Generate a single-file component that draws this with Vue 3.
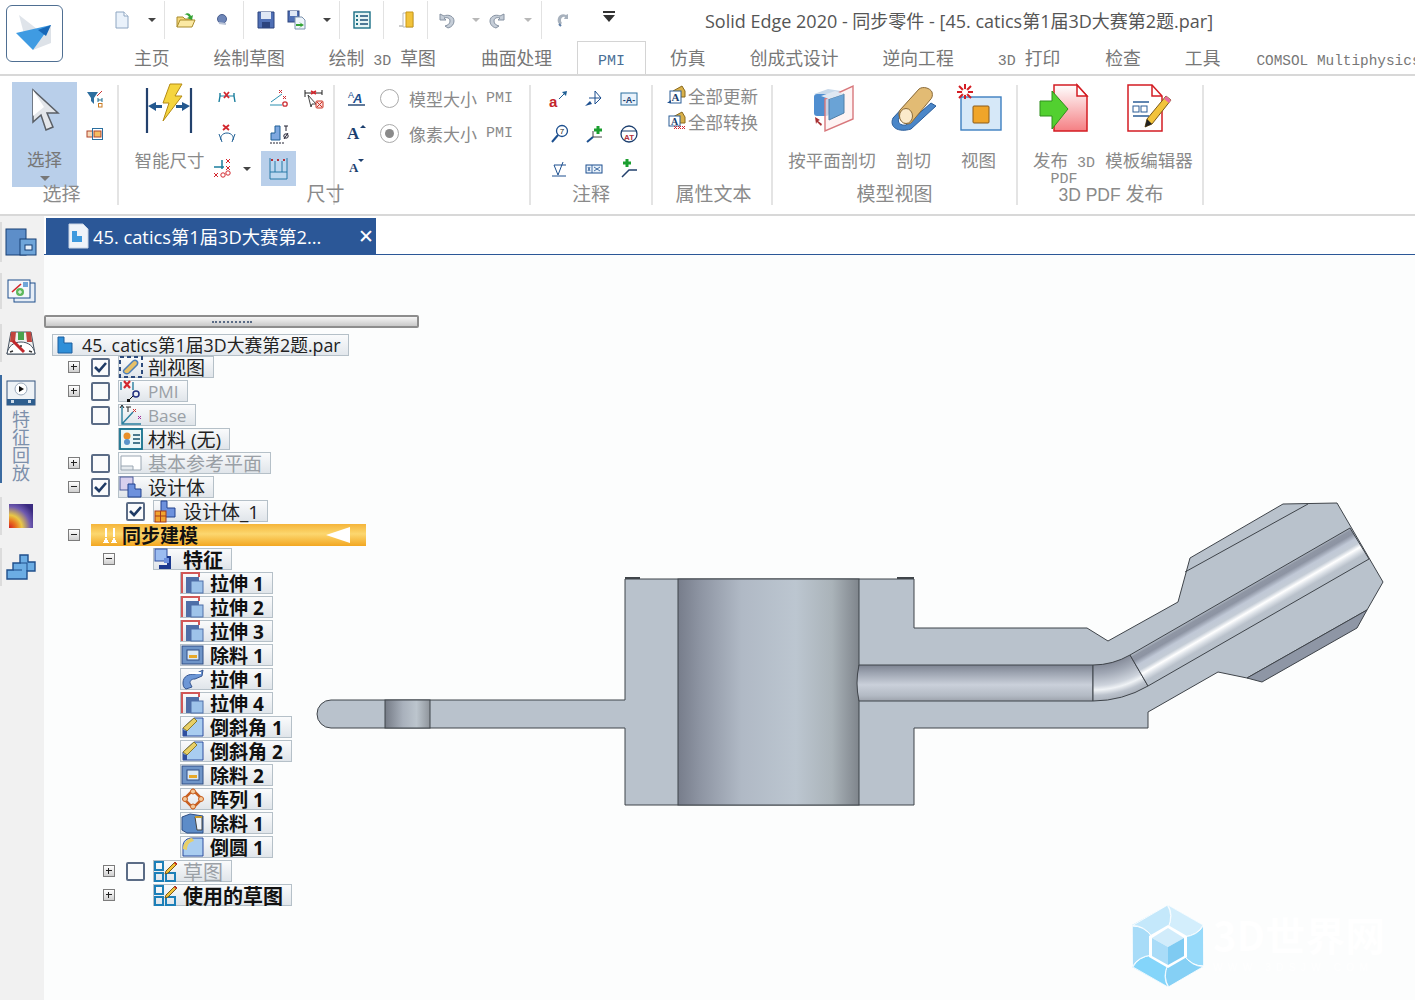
<script setup>
const svg = (w, h, body) => `<svg xmlns="http://www.w3.org/2000/svg" width="${w}" height="${h}" viewBox="0 0 ${w} ${h}" style="display:block;overflow:visible">${body}</svg>`;

const icons = {
  doc: svg(18, 20, '<path d="M3 2h8l4 4v12H3z" fill="#eaf2fb" stroke="#8ea6c2"/><path d="M11 2v4h4" fill="#fff" stroke="#8ea6c2"/>'),
  open: svg(22, 20, '<path d="M2 17V7h6l2 2h7v2" fill="#f4d77a" stroke="#a98b2c"/><path d="M2 17l3-7h15l-3 7z" fill="#fbe9a3" stroke="#a98b2c"/><path d="M9 5c3-3 6-2 7 1l2-1-1 5-5-2 2-1c-1-2-3-3-5-2z" fill="#35a336"/>'),
  globe: svg(16, 18, '<circle cx="8" cy="8" r="4.5" fill="#6e86b8" stroke="#4a5f8f"/><path d="M5 12l7 1" stroke="#b9c3d6" stroke-width="2"/>'),
  save: svg(18, 18, '<path d="M1 1h16v16H1z" fill="#4f6fb5" stroke="#2c447f"/><rect x="4" y="1" width="10" height="7" fill="#dfe7f5"/><rect x="5" y="11" width="8" height="6" fill="#2c447f"/>'),
  saveas: svg(20, 20, '<rect x="1" y="1" width="11" height="11" fill="#4f6fb5" stroke="#2c447f"/><rect x="3" y="1" width="7" height="5" fill="#dfe7f5"/><path d="M8 7h7l3 3v9H8z" fill="#eef4fb" stroke="#7c93ad"/><path d="M9 14h5l-2-2 5 3-5 3 2-2H9z" fill="#35a336"/>'),
  list: svg(18, 18, '<rect x="1" y="1" width="16" height="16" fill="#e6f4f4" stroke="#1b6f86" stroke-width="1.4"/><path d="M7 5h8M7 9h8M7 13h8" stroke="#1b4f76" stroke-width="1.3"/><path d="M3 4h2v2H3zM3 8h2v2H3zM3 12h2v2H3z" fill="#1b6f86"/>'),
  door: svg(18, 18, '<path d="M2 15h5" stroke="#9a9a9a"/><path d="M6 2h10v14H6z" fill="#fff" stroke="#bbb"/><path d="M9 1h7v15H9z" fill="#f2c33b" stroke="#c99818"/>'),
  undo: svg(18, 18, '<path d="M3 3v6h6L7 7c3-1 6 0 6 3s-2 4-5 5l3 2c4-1 6-4 6-7 0-5-6-7-10-5z" fill="#c6ced8" stroke="#8692a2"/>'),
  redo: svg(18, 18, '<path d="M15 3v6H9l2-2c-3-1-6 0-6 3s2 4 5 5l-3 2c-4-1-6-4-6-7 0-5 6-7 10-5z" fill="#c6ced8" stroke="#8692a2"/>'),
  redoSmall: svg(16, 16, '<path d="M12 2v5H8l1-2c-2-1-4 1-4 3 0 1 0 2 1 3l-2 2C2 11 1 9 2 6c1-3 5-5 8-3z" fill="#a7b1bd"/><path d="M3 12l2 2" stroke="#5f7ea6" stroke-width="2"/>'),
  qat: svg(14, 12, '<path d="M1 1h12" stroke="#333" stroke-width="2"/><path d="M1 4h12l-6 7z" fill="#333"/>'),

  cursor: svg(28, 46, '<path d="M2 2v32l8-7 5 15 7-3-6-14h11z" fill="#e3e6ea" stroke="#5a5f66" stroke-width="1.5"/><path d="M2 2l11 17-11 9z" fill="#fff"/>'),
  filter: svg(18, 18, '<path d="M1 2h11L8 8v6L5 11V8z" fill="#2d6e9f"/><path d="M11 6l5-5" stroke="#c33"/><path d="M12 8v4M16 8v4M12 10h4" fill="none" stroke="#1c6f8f"/><rect x="12.500" y="13.500" width="3.500" height="3.500" fill="none" stroke="#c97a22"/>'),
  boxes: svg(18, 14, '<rect x="1" y="4" width="6" height="6" fill="#f7d9b8" stroke="#b0452a"/><rect x="6.500" y="1.500" width="10" height="11" fill="#fff" stroke="#2b6f9f"/><rect x="8" y="4" width="7" height="6" fill="#f4bd62" stroke="#b0452a"/>'),
  smart: svg(50, 50, '<path d="M2 5v45M46 5v45" stroke="#23416d" stroke-width="2.2"/><path d="M3 23l8-4v3h6v3h-6v3zM45 23l-8-4v3h-6v3h6v3z" fill="#23588f"/><path d="M25 1h12l-7 12h7L18 38l6-18h-6z" fill="#f5d53f" stroke="#b58b14"/>'),
  dimA: svg(20, 18, '<path d="M3 3v3l-1 6M17 3v3l1 6" fill="none" stroke="#1b7f9e" stroke-width="1.4"/><path d="M3 6h14" stroke="#1b7f9e"/><path d="M7 2l5 6M12 2L7 8" stroke="#d3272e" stroke-width="1.8"/>'),
  dimB: svg(20, 20, '<path d="M1 16h12" stroke="#2b8fb0"/><path d="M2 13L13 5" stroke="#2b8fb0"/><path d="M10 1l3 3M13 1l-3 3M14 7l3 3M17 7l-3 3" stroke="#cc2f35"/><circle cx="16" cy="15" r="2.200" fill="none" stroke="#cc2f35" stroke-width="1.300"/>'),
  dimC: svg(22, 22, '<path d="M2 2v7M2 5h17M19 2v5" stroke="#222" fill="none"/><path d="M8 3l5 3M13 3L8 6" stroke="#d3272e" stroke-width="1.500"/><path d="M5 7l8 9H9l-1 3z" fill="#fff" stroke="#444"/><rect x="13" y="13" width="7" height="7" rx="1" fill="#f9dede" stroke="#c32"/><path d="M14 14l5 5M19 14l-5 5" stroke="#c32"/>'),
  dimD: svg(20, 20, '<path d="M6 1l6 5M12 1L6 6" stroke="#d3272e" stroke-width="1.800"/><path d="M4 16c-1-3 1-7 6-7s7 4 6 7" fill="none" stroke="#1f5f95"/><path d="M2 10l3 8M18 10l-3 8" stroke="#1f5f95"/>'),
  dimE: svg(20, 20, '<path d="M2 16V9h4V2h5v14z" fill="#7ea8e0" stroke="#1f5f95"/><path d="M1 19h14" stroke="#223" stroke-dasharray="2 1"/><path d="M15 2h4M17 2v5" stroke="#223"/><circle cx="17" cy="12" r="2.200" fill="none" stroke="#223"/><path d="M15 15l4-6" stroke="#223"/>'),
  dimF: svg(22, 22, '<path d="M9 2v9M1 9h10" stroke="#1b7f9e" stroke-width="1.500"/><path d="M13 1l4 4M17 1l-4 4M13 8l4 4M17 8l-4 4M1 15l4 4M5 15l-4 4" stroke="#d3272e"/><circle cx="10" cy="17" r="2.200" fill="none" stroke="#d3272e"/><circle cx="15" cy="15" r="2.200" fill="none" stroke="#d3272e"/>'),
  dimG: svg(22, 24, '<rect x="2" y="3" width="17" height="19" fill="#bcd7ef"/><path d="M2 1v21h17V1M7 4v11h7V4M2 15h5M14 15h5" fill="none" stroke="#2679a6"/><path d="M3 2l2 2M5 2L3 4M9 2l2 2M11 2L9 4M15 2l2 2M17 2l-2 2" stroke="#b5323a"/>'),
  textA: svg(20, 16, '<text x="1" y="8" font-size="9" font-family="Liberation Sans" fill="#1c4f8f">A</text><text x="6" y="13" font-size="13" font-weight="700" font-family="Liberation Sans" fill="#1c4f8f" font-style="italic">A</text><path d="M1 15h17" stroke="#1c3f6f" stroke-width="1.400"/>'),
  textUp: svg(22, 18, '<text x="1" y="16" font-size="17" font-weight="700" font-family="Liberation Serif" fill="#1c3f6f">A</text><path d="M14 5l3-3 3 3z" fill="#1c3f6f"/>'),
  textDown: svg(18, 16, '<text x="1" y="15" font-size="13" font-weight="700" font-family="Liberation Serif" fill="#1c3f6f">A</text><path d="M10 2h6l-3 3z" fill="#1c3f6f"/>'),

  n1: svg(20, 20, '<path d="M10 10l7-7" stroke="#1f5f95"/><path d="M18 2l-1 5-4-4z" fill="#1f5f95"/><text x="0" y="18" font-size="15" font-weight="700" font-family="Liberation Sans" fill="#c3242b">a</text>'),
  n2: svg(20, 20, '<path d="M11 2v13M5 9h12L11 2M17 9l-6 6" fill="none" stroke="#1c4f8f"/><path d="M1 17l5-5 2 3z" fill="#1c4f8f"/>'),
  n3: svg(20, 18, '<rect x="2" y="3" width="16" height="12" fill="#e9f2fb" stroke="#2b6f9f"/><text x="10" y="12.500" text-anchor="middle" font-size="9" font-family="Liberation Sans" font-weight="700" fill="#1c3f6f">-A-</text>'),
  n4: svg(20, 20, '<circle cx="13" cy="7" r="5.500" fill="#fff" stroke="#1c4f8f" stroke-width="1.300"/><text x="13" y="10" text-anchor="middle" font-size="8" font-family="Liberation Sans" fill="#222">7</text><path d="M9 11l-6 7" stroke="#1c4f8f" stroke-width="2"/>'),
  n5: svg(20, 20, '<path d="M9 13h9" stroke="#444"/><path d="M9 7v6" stroke="#444"/><path d="M14 2v8M10 6h8" stroke="#1c9f30" stroke-width="3"/><path d="M9 13l-6 5" stroke="#1c4f8f" stroke-width="2"/>'),
  n6: svg(20, 20, '<circle cx="10" cy="10" r="8" fill="#fff" stroke="#1c3f6f" stroke-width="1.300"/><path d="M2 7h16" stroke="#1c3f6f"/><text x="10" y="16" text-anchor="middle" font-size="8" font-weight="700" font-family="Liberation Sans" fill="#b5323a">AT</text>'),
  n7: svg(20, 20, '<path d="M5 6l4 10 5-13M5 6h12" fill="none" stroke="#1c4f8f"/><path d="M3 17h14" stroke="#1c4f8f"/>'),
  n8: svg(20, 14, '<rect x="2" y="3" width="16" height="8" fill="#e9f2fb" stroke="#1c4f8f"/><path d="M8 3v8M4 5l2 4M6 5L4 9M10 5l6 4M16 5l-6 4" stroke="#1c4f8f" stroke-width=".8"/>'),
  n9: svg(20, 22, '<path d="M8 1v8M4 5h8" stroke="#1c9f30" stroke-width="3"/><path d="M3 19l7-7h8" fill="none" stroke="#23416d" stroke-width="1.500"/>'),
  attrA: svg(20, 20, '<path d="M6 6l9-5 3 5v6H6z" fill="#d8b04a" stroke="#8a6a1e"/><rect x="3" y="6" width="11" height="12" fill="#fff" stroke="#2b5d96"/><text x="8.500" y="16" text-anchor="middle" font-size="11" font-weight="700" font-family="Liberation Serif" fill="#1c3f6f">A</text><path d="M0 18l4-3 0 3z" fill="#1c4f8f"/>'),
  attrB: svg(20, 20, '<path d="M6 6l9-5 3 5v6H6z" fill="#d8b04a" stroke="#8a6a1e"/><rect x="2" y="5" width="11" height="10" fill="#fff" stroke="#2b5d96"/><text x="7.500" y="14" text-anchor="middle" font-size="10" font-weight="700" font-family="Liberation Serif" fill="#1c3f6f">A</text><path d="M7 15l3 3M10 15l-3 3M11 15l3 3M14 15l-3 3M15 15l3 3M18 15l-3 3" stroke="#d3272e"/>'),
  cutPlane: svg(50, 50, '<path d="M7 11l14-5 13 2v4" fill="#c7d9ea"/><rect x="7" y="11" width="15" height="22" rx="3" fill="#4f8ed0"/><path d="M18 16L46 3v33L18 48z" fill="#fdeeee" fill-opacity=".7" stroke="#d8787c" stroke-width="1.400"/><path d="M22 16l15-5v19l-15 7z" fill="#6aa3d6" stroke="#4f7fa8"/><path d="M22 16l-8-3 14-5 9 3z" fill="#dfe8f2"/><path d="M13 37l-5-3 1 7 1-2 4 4 1-2-4-3z" fill="#a72f32"/>'),
  cutSolid: svg(48, 50, '<path d="M3 35L30 6l3 2L9 35c-2 4 1 8 7 7l25-22 5 3-25 23C8 50-1 44 3 35z" fill="#4a86c8" stroke="#2a5d9a"/><path d="M10 27L29 6c4-3 11-1 13 3 1 4 0 6-2 8L21 40c-7 4-15-6-11-13z" fill="#e2bb74" stroke="#8a6a3a"/><ellipse cx="16" cy="33" rx="6.500" ry="7.500" fill="#fbeacb" stroke="#8a6a3a"/>'),
  view: svg(48, 50, '<rect x="6" y="14" width="40" height="33" fill="#d6e8f8" stroke="#3d7fc0" stroke-width="1.400"/><rect x="18" y="23" width="16" height="17" rx="1" fill="#f0a52a" stroke="#8a5a1a"/><path d="M10 1v15M2 9h16M4 3l12 12M16 3L4 15" stroke="#d41d23" stroke-width="2"/><circle cx="10" cy="9" r="3" fill="#fff"/>'),
  pdf: svg(50, 50, '<defs><linearGradient id="pdfPage" x1="0" x2="0" y1="0" y2="1"><stop offset="0" stop-color="#fff"/><stop offset="1" stop-color="#f57f83"/></linearGradient></defs><path d="M15 2h23l10 11v35H15z" fill="url(#pdfPage)" stroke="#d41d23" stroke-width="1.500"/><path d="M38 2v11h10z" fill="#fff" stroke="#d41d23" stroke-width="1.500"/><path d="M1 18h12V8l16 18-16 20V33H1z" fill="#52d030" stroke="#2f8f1c"/>'),
  template: svg(46, 50, '<path d="M2 2h24l10 11v35H2z" fill="#fff" stroke="#d41d23" stroke-width="1.500"/><path d="M26 2v11h10" fill="none" stroke="#d41d23" stroke-width="1.500"/><path d="M7 19h16M7 33h16" stroke="#2b5d96" stroke-width="1.500"/><rect x="7" y="23" width="6" height="6" fill="none" stroke="#2b5d96"/><rect x="15" y="23" width="6" height="6" fill="none" stroke="#2b5d96"/><path d="M40 13l5 4-19 24-7 3 2-8z" fill="#f2c33b" stroke="#7a5a1a"/><path d="M40 13l5 4-2 3-5-4z" fill="#e86aa0"/><path d="M21 36l5 5-7 3z" fill="#222"/>'),

  tabDoc: svg(22, 26, '<path d="M2 1h14l5 5v19H2z" fill="#eef3f9" stroke="#c9d5e4"/><path d="M5 8h5v5h5v6H5z" fill="#3f9ade"/>'),
  rootDoc: svg(18, 18, '<path d="M2 1h6v6h8v10H2z" fill="#2f8fd8" stroke="#1d5f9f"/>'),
  winTile: svg(32, 28, '<rect x="1" y="1" width="20" height="26" fill="#5d8ec9" stroke="#173f75"/><rect x="15" y="11" width="16" height="16" fill="#6fa5d9" stroke="#173f75"/><rect x="20" y="17" width="7" height="5" fill="#e9f2fb" stroke="#173f75"/>'),
  stripA: svg(30, 24, '<rect x="8" y="4" width="21" height="19" fill="#e6edf6" stroke="#1f4f8c"/><rect x="2" y="1" width="22" height="18" fill="#f4f7fb" stroke="#1f4f8c"/><path d="M6 13l9-8" stroke="#d3272e" stroke-width="1.600"/><circle cx="14" cy="13" r="4" fill="#5db85d"/><path d="M14 11v4M12 13h4" stroke="#fff"/><rect x="17" y="3" width="5" height="5" fill="#6fa5d9"/>'),
  stripB: svg(30, 26, '<path d="M1 24L5 2h20l4 22z" fill="#f0f0f0" stroke="#44505f"/><path d="M5 2h5l-1 10H4z" fill="#c1453e"/><path d="M12 2h6v8h-6z" fill="#49a34e"/><path d="M20 2h5l1 10h-5z" fill="#c1453e"/><path d="M1 24c1-8 7-12 14-12s13 4 14 12z" fill="#fff" stroke="#44505f"/><path d="M7 11l11 11" stroke="#c1262b" stroke-width="3"/><path d="M4 22l3-1M26 22l-3-1M15 15v2" stroke="#333" stroke-width="1.500"/>'),
  stripC: svg(30, 26, '<rect x="1" y="1" width="28" height="24" fill="#eef2f6" stroke="#34557f"/><rect x="1" y="19" width="28" height="6" fill="#2f5e8e"/><path d="M5 20h3v3H5zM22 20h3v3h-3z" fill="#cfdbe8"/><circle cx="15" cy="9" r="6" fill="#fff" stroke="#9aa9bb"/><path d="M13 6v6l5-3z" fill="#111"/>'),
  stripD: svg(26, 26, '<defs><radialGradient id="heat" cx="0" cy="1" r="1.200"><stop offset="0" stop-color="#d41d23"/><stop offset=".25" stop-color="#e8761f"/><stop offset=".45" stop-color="#eac846"/><stop offset=".75" stop-color="#6f5ab0"/><stop offset="1" stop-color="#3a2a80"/></radialGradient></defs><rect x="1" y="1" width="24" height="24" fill="url(#heat)"/>'),
  stripE: svg(30, 26, '<path d="M14 1h8v7h7v9h-8v8H1v-9h6V9h7z" fill="#6cade4" stroke="#1f4f8c" stroke-width="1.400"/><path d="M7 16h9M14 9h7v8" fill="none" stroke="#1f4f8c"/>'),

  section: svg(24, 22, '<rect x="1" y="1" width="22" height="20" fill="none" stroke="#2c4a7c" stroke-width="2" stroke-dasharray="4 3"/><path d="M5 14l9-9c3-2 6 1 4 4l-8 8c-3 2-7-1-5-3z" fill="#e7c068" stroke="#4e7fb8" stroke-width="1.500"/>'),
  pmi: svg(24, 22, '<path d="M2 2v8M14 2v8" stroke="#2b7f9e" stroke-width="1.400"/><path d="M5 1l6 7M11 1L5 8" stroke="#d3272e" stroke-width="2.200"/><circle cx="17" cy="14" r="3" fill="none" stroke="#23307f" stroke-width="1.500"/><path d="M14 16l-4 4" stroke="#111"/><rect x="8" y="19" width="3" height="3" fill="#111"/>'),
  base: svg(24, 22, '<path d="M3 2v18h19M3 20L14 8" fill="none" stroke="#2b7f9e" stroke-width="1.400"/><path d="M1 4l2-3 2 3M7 3h5M9 3v5" fill="none" stroke="#222"/><path d="M14 5l3 3M17 5l-3 3" stroke="#c33"/><path d="M19 12l3 3M22 12l-3 3" stroke="#a3309a"/>'),
  material: svg(24, 22, '<rect x="1" y="1" width="22" height="20" fill="#eaf6f7" stroke="#15708c" stroke-width="1.800"/><circle cx="8" cy="8" r="3.500" fill="#e8902a"/><circle cx="8" cy="14" r="3" fill="#5b93c9"/><path d="M14 7h7M14 11h7M14 15h7" stroke="#15506c" stroke-width="1.600"/>'),
  plane: svg(24, 20, '<path d="M2 3h20v14h-8v-4H2z" fill="#fff" stroke="#9aa6b2"/><path d="M2 13v4h12" fill="none" stroke="#9aa6b2"/>'),
  body: svg(24, 22, '<rect x="1" y="1" width="13" height="13" fill="#d8d0ee" stroke="#4b5a9a"/><path d="M9 8h7v5h6v8H9z" fill="#6d91dd" stroke="#23438f"/>'),
  body1: svg(24, 22, '<path d="M7 1h6v7h8v9H7z" fill="#6d91dd" stroke="#23438f"/><rect x="1" y="11" width="11" height="11" fill="#f2a530" stroke="#a53a1a"/><path d="M6.500 11v11M1 16h11" stroke="#a53a1a"/>'),
  feature: svg(24, 22, '<rect x="1" y="1" width="12" height="12" fill="#9cbdf0" stroke="#2f4f9f"/><path d="M13 8h4v13H5v-4h8z" fill="#1c3a8f"/><rect x="10" y="10" width="5" height="5" fill="#6d91dd"/>'),
  extrude: svg(24, 22, '<path d="M1 21V1h17v4" fill="none" stroke="#d15858" stroke-width="2"/><rect x="5" y="5" width="13" height="16" fill="#4f6fa8"/><rect x="10" y="9" width="12" height="12" fill="#9ec3ea" stroke="#4f6fa8"/>'),
  cut: svg(24, 22, '<rect x="1" y="2" width="21" height="18" fill="#6f95c8" stroke="#314f85"/><rect x="6" y="6" width="12" height="10" fill="#dce9f6" stroke="#314f85"/><path d="M8 11h8v3H8z" fill="#e8a82a"/>'),
  sweep: svg(24, 22, '<path d="M2 15c0-7 6-9 12-9l8-4-1 6-7 3c-4 0-5 2-5 4l2 4-6 2c-2-1-3-3-3-6z" fill="#6d97d6" stroke="#35558f"/><path d="M8 5h12" stroke="#fff" stroke-width="2"/>'),
  chamfer: svg(24, 22, '<path d="M2 20v-8L13 2h9v18z" fill="#a9cdf0" stroke="#2f4f9f"/><path d="M2 12L13 2l3 3L6 15z" fill="#e8cf66" stroke="#8a7a2a"/><path d="M2 20v-6l4 1v5z" fill="#2f4f9f"/>'),
  pattern: svg(24, 22, '<path d="M12 2l9 9-9 9-9-9z" fill="none" stroke="#c85f20" stroke-width="2.500"/><circle cx="12" cy="3.500" r="2.500" fill="#f2c89a" stroke="#c85f20"/><circle cx="12" cy="18.500" r="2.500" fill="#f2c89a" stroke="#c85f20"/><circle cx="4" cy="11" r="2.500" fill="#f2c89a" stroke="#c85f20"/><circle cx="20" cy="11" r="2.500" fill="#f2c89a" stroke="#c85f20"/>'),
  loft: svg(24, 22, '<path d="M1 5l8-3 13 2v17H6L1 18z" fill="#5d8cc8" stroke="#2f4f85"/><path d="M14 5h7v13h-5z" fill="#eef3f9" stroke="#444"/><path d="M14 5h7" stroke="#c89a2a" stroke-width="2"/>'),
  round: svg(24, 22, '<path d="M2 20V10C2 5 6 2 11 2h11v18z" fill="#a9cdf0" stroke="#2f4f9f"/><path d="M2 13C2 7 6 3 11 2l2 3C8 6 6 9 6 14z" fill="#e8cf66"/>'),
  sketch: svg(24, 22, '<rect x="1" y="2" width="8" height="8" fill="none" stroke="#1c7fb8" stroke-width="2"/><rect x="1" y="13" width="8" height="8" fill="none" stroke="#1c7fb8" stroke-width="2"/><rect x="12" y="13" width="9" height="8" fill="none" stroke="#1c7fb8" stroke-width="2"/><path d="M12 11l9-9 2 2-9 9-3 1z" fill="#f2c33b" stroke="#7a5a1a"/><path d="M21 2l2 2-1 1-2-2z" fill="#d41d23"/>')
};

// centre x of each quick access item on the title bar
const quickRaw = [
  { icon: 'doc', x: 122 }, { caret: true, x: 152 }, { sep: true, x: 164 },
  { icon: 'open', x: 186 }, { icon: 'globe', x: 222 }, { sep: true, x: 243 },
  { icon: 'save', x: 266 }, { icon: 'saveas', x: 297 }, { caret: true, x: 327 }, { sep: true, x: 339 },
  { icon: 'list', x: 362 }, { sep: true, x: 383 }, { icon: 'door', x: 406 }, { sep: true, x: 427 },
  { icon: 'undo', x: 446 }, { caret: true, pale: true, x: 476 }, { icon: 'redo', x: 498 }, { caret: true, pale: true, x: 528 }, { sep: true, x: 541 },
  { icon: 'redoSmall', x: 564 }, { more: true, x: 609 }
];
let quickEnd = 112;
const quickAccess = quickRaw.map(function (q) {
  const w = q.sep ? 1 : q.caret ? 8 : 20;
  const gap = q.x - w / 2 - quickEnd;
  quickEnd = q.x + w / 2;
  return { ...q, gap };
});

const tabs = [
  { parts: [['主页']] },
  { parts: [['绘制草图']] },
  { parts: [['绘制'], [' 3D ', true], ['草图']], extra: true },
  { parts: [['曲面处理']] },
  { parts: [['PMI', true]], active: true },
  { parts: [['仿真']] },
  { parts: [['创成式设计']] },
  { parts: [['逆向工程']] },
  { parts: [['3D ', true], ['打印']], extra: true },
  { parts: [['检查']] },
  { parts: [['工具']], tight: true },
  { parts: [['COMSOL Multiphysics', true]] }
];

const noteIcons = ['n1', 'n2', 'n3', 'n4', 'n5', 'n6', 'n7', 'n8', 'n9'];

const tree = [
  { text: '剖视图', icon: 'section', depth: 1, exp: 'plus', check: true },
  { text: 'PMI', icon: 'pmi', depth: 1, exp: 'plus', check: false, dim: true, latin: true },
  { text: 'Base', icon: 'base', depth: 1, check: false, dim: true, latin: true },
  { text: '材料 (无)', icon: 'material', depth: 1 },
  { text: '基本参考平面', icon: 'plane', depth: 1, exp: 'plus', check: false, dim: true },
  { text: '设计体', icon: 'body', depth: 1, exp: 'minus', check: true },
  { text: '设计体_1', icon: 'body1', depth: 2, check: true },
  { text: '同步建模', depth: 1, exp: 'minus', orange: true },
  { text: '特征', icon: 'feature', depth: 2, exp: 'minus', bold: true, lg: true },
  { text: '拉伸 1', icon: 'extrude', depth: 3, bold: true },
  { text: '拉伸 2', icon: 'extrude', depth: 3, bold: true },
  { text: '拉伸 3', icon: 'extrude', depth: 3, bold: true },
  { text: '除料 1', icon: 'cut', depth: 3, bold: true },
  { text: '拉伸 1', icon: 'sweep', depth: 3, bold: true },
  { text: '拉伸 4', icon: 'extrude', depth: 3, bold: true },
  { text: '倒斜角 1', icon: 'chamfer', depth: 3, bold: true },
  { text: '倒斜角 2', icon: 'chamfer', depth: 3, bold: true },
  { text: '除料 2', icon: 'cut', depth: 3, bold: true },
  { text: '阵列 1', icon: 'pattern', depth: 3, bold: true },
  { text: '除料 1', icon: 'loft', depth: 3, bold: true },
  { text: '倒圆 1', icon: 'round', depth: 3, bold: true },
  { text: '草图', icon: 'sketch', depth: 2, exp: 'plus', check: false, dim: true, lg: true },
  { text: '使用的草图', icon: 'sketch', depth: 2, exp: 'plus', bold: true, hideCheck: true, lg: true }
];

const petals = [0, 60, 120, 180, 240, 300];
const petalFill = ['#d3eefc', '#97dafa', '#85d0f5', '#84d5fa', '#a8dcf8', '#c4e8fb'];
</script>

<template>
  <div class="page">
    <header class="header">
      <div class="logo-col">
        <div class="logo">
          <svg width="54" height="54" viewBox="0 0 54 54">
            <polygon points="12,9 30,23 17,28" fill="#dfe4ea" />
            <polygon points="26,44 44,19 44,37" fill="#dde2e8" />
            <polygon points="9,27 44,19 26,44" fill="#3f9be2" />
            <polygon points="31,24 44,19 39,30" fill="#1768b8" />
          </svg>
        </div>
      </div>
      <div class="header-main">
        <div class="title-row">
          <div class="quick">
            <template v-for="(q, i) in quickAccess" :key="i">
              <span v-if="q.sep" class="q-sep" :style="{ marginLeft: q.gap + 'px' }" />
              <span v-else-if="q.caret" class="q-caret" :class="{ pale: q.pale }" :style="{ marginLeft: q.gap + 'px' }" />
              <span v-else-if="q.more" class="q-btn q-more" :style="{ marginLeft: q.gap + 'px' }" v-html="icons.qat" />
              <span v-else class="q-btn" :style="{ marginLeft: q.gap + 'px' }" v-html="icons[q.icon]" />
            </template>
          </div>
          <div class="title">Solid Edge 2020 - 同步零件 - [45. catics第1届3D大赛第2题.par]</div>
        </div>
        <nav class="tabs">
          <span
            v-for="(t, i) in tabs"
            :key="i"
            class="tab"
            :class="{ active: t.active, tight: t.tight, extra: t.extra }"
          ><span
            v-for="(p, j) in t.parts"
            :key="j"
            :class="{ mono: p[1] }"
          >{{ p[0] }}</span></span>
        </nav>
      </div>
    </header>

    <section class="ribbon">
      <div class="group g-select">
        <div class="group-body">
          <div class="select-btn">
            <span v-html="icons.cursor" />
            <span class="big-text select-text">选择</span>
            <span class="select-caret" />
          </div>
          <div class="select-side">
            <span class="cell" v-html="icons.filter" />
            <span class="cell" v-html="icons.boxes" />
          </div>
        </div>
        <div class="group-label">选择</div>
      </div>

      <div class="group g-dim">
        <div class="group-body">
          <div class="big smart">
            <span class="big-icon" v-html="icons.smart" />
            <span class="big-text">智能尺寸</span>
          </div>
          <div class="dim-grid">
            <span class="cell wide" v-html="icons.dimA" />
            <span class="cell" v-html="icons.dimB" />
            <span class="cell" v-html="icons.dimC" />
            <span class="cell wide" v-html="icons.dimD" />
            <span class="cell" v-html="icons.dimE" />
            <span class="cell" />
            <span class="cell split">
              <span v-html="icons.dimF" />
              <span class="q-caret" />
            </span>
            <span class="cell on" v-html="icons.dimG" />
          </div>
          <div class="inner-sep" />
          <div class="text-col">
            <span class="cell" v-html="icons.textA" />
            <span class="cell" v-html="icons.textUp" />
            <span class="cell" v-html="icons.textDown" />
          </div>
          <div class="radio-col">
            <label class="radio"><i />模型大小<span class="mono">&nbsp;PMI</span></label>
            <label class="radio sel"><i />像素大小<span class="mono">&nbsp;PMI</span></label>
          </div>
        </div>
        <div class="group-label">尺寸</div>
      </div>

      <div class="group g-note">
        <div class="group-body">
          <div class="note-grid">
            <span v-for="n in noteIcons" :key="n" class="cell" v-html="icons[n]" />
          </div>
        </div>
        <div class="group-label">注释</div>
      </div>

      <div class="group g-attr">
        <div class="group-body attr-body">
          <div class="attr-row"><span v-html="icons.attrA" />全部更新</div>
          <div class="attr-row"><span v-html="icons.attrB" />全部转换</div>
        </div>
        <div class="group-label">属性文本</div>
      </div>

      <div class="group g-view">
        <div class="group-body">
          <div class="big w90">
            <span class="big-icon" v-html="icons.cutPlane" />
            <span class="big-text">按平面剖切</span>
          </div>
          <div class="big w35 gap19">
            <span class="big-icon" v-html="icons.cutSolid" />
            <span class="big-text">剖切</span>
          </div>
          <div class="big w35 gap30">
            <span class="big-icon" v-html="icons.view" />
            <span class="big-text">视图</span>
          </div>
        </div>
        <div class="group-label">模型视图</div>
      </div>

      <div class="group g-pdf">
        <div class="group-body">
          <div class="big w62">
            <span class="big-icon" v-html="icons.pdf" />
            <span class="big-text">发布<span class="mono">&nbsp;3D PDF</span></span>
          </div>
          <div class="big w90 gap9">
            <span class="big-icon" v-html="icons.template" />
            <span class="big-text">模板编辑器</span>
          </div>
        </div>
        <div class="group-label"><span class="narrow">3D PDF </span>发布</div>
      </div>
    </section>

    <div class="work">
      <aside class="strip">
        <span class="strip-item s1" v-html="icons.winTile" />
        <span class="strip-item s2" v-html="icons.stripA" />
        <span class="strip-item s3" v-html="icons.stripB" />
        <div class="replay">
          <span v-html="icons.stripC" />
          <span class="replay-text">特征回放</span>
        </div>
        <span class="strip-item s5" v-html="icons.stripD" />
        <span class="strip-item s6" v-html="icons.stripE" />
      </aside>

      <main class="doc">
        <div class="doc-tabs">
          <div class="doc-tab">
            <span v-html="icons.tabDoc" />
            <span class="doc-name">45. catics第1届3D大赛第2...</span>
            <span class="doc-close">✕</span>
          </div>
        </div>

        <div class="canvas">
          <svg class="model" width="1371" height="745" viewBox="44 255 1371 745">
            <defs>
              <linearGradient id="boreFill" x1="0" x2="1" y1="0" y2="0">
                <stop offset="0" stop-color="#777d8b" />
                <stop offset=".12" stop-color="#8d94a2" />
                <stop offset=".35" stop-color="#b0b9c5" />
                <stop offset=".65" stop-color="#bcc6d0" />
                <stop offset=".85" stop-color="#aab3b9" />
                <stop offset="1" stop-color="#7f858c" />
              </linearGradient>
              <linearGradient id="holeFill" x1="0" x2="1" y1="0" y2="0">
                <stop offset="0" stop-color="#757b86" />
                <stop offset=".4" stop-color="#a9b1bc" />
                <stop offset=".7" stop-color="#bcc5cd" />
                <stop offset="1" stop-color="#8f959c" />
              </linearGradient>
              <linearGradient id="tubeFill" x1="0" x2="0" y1="0" y2="1">
                <stop offset="0" stop-color="#7d8391" />
                <stop offset=".2" stop-color="#9aa1ae" />
                <stop offset=".55" stop-color="#cad0da" />
                <stop offset=".85" stop-color="#b3bac4" />
                <stop offset="1" stop-color="#9da3ac" />
              </linearGradient>
              <radialGradient id="bendFill" gradientUnits="userSpaceOnUse" cx="1093" cy="591" r="110">
                <stop offset=".673" stop-color="#868c9a" />
                <stop offset=".75" stop-color="#a0a7b4" />
                <stop offset=".86" stop-color="#cdd3dc" />
                <stop offset=".9" stop-color="#f0f3f6" />
                <stop offset=".95" stop-color="#bcc3cd" />
                <stop offset="1" stop-color="#a9b0ba" />
              </radialGradient>
              <linearGradient id="pipeFill" gradientUnits="userSpaceOnUse" x1="1130" y1="655" x2="1148" y2="686">
                <stop offset="0" stop-color="#b6bfca" />
                <stop offset=".08" stop-color="#8f96a4" />
                <stop offset=".2" stop-color="#8d94a3" />
                <stop offset=".35" stop-color="#c0c8d6" />
                <stop offset=".5" stop-color="#c4ccd6" />
                <stop offset=".62" stop-color="#ffffff" />
                <stop offset=".72" stop-color="#dde2e8" />
                <stop offset=".85" stop-color="#b9c1cb" />
                <stop offset="1" stop-color="#b7c0ca" />
              </linearGradient>
            </defs>
            <path
              class="edge"
              fill="#b9c2cc"
              d="M625 579H914V628H1087L1108 641L1178 602L1190 558L1283 504L1337 503L1383 582L1367 610L1247 678L1218 672L1148 712V728H914V805H625V728H331A14 14 0 0 1 331 700H625Z"
            />
            <polygon class="edge" fill="#8e96a5" points="1367,610 1357,628 1262,682 1247,678" />
            <rect class="edge" x="678" y="579" width="181" height="226" fill="url(#boreFill)" />
            <rect class="edge" x="385" y="700" width="45" height="28" fill="url(#holeFill)" />
            <path class="edge" fill="url(#tubeFill)" d="M859 665H1093V701H859Q855 683 859 665Z" />
            <path class="edge" fill="url(#bendFill)" d="M1093 665A74 74 0 0 0 1130 655L1148 686A110 110 0 0 1 1093 701Z" />
            <polygon class="edge" fill="url(#pipeFill)" points="1130,655 1350,528 1369,559 1148,686" />
            <path class="edge" fill="none" d="M1185 572L1308 504" />
            <path d="M625 578H640M897 578H914" stroke="#40454a" stroke-width="2" fill="none" />
          </svg>

          <div class="mark-logo">
            <svg width="74" height="84" viewBox="1131 904 74 84">
              <polygon points="1168,905 1203,925 1203,967 1168,987 1132,967 1132,925" fill="#b9e4fa" />
              <g v-for="(deg, i) in petals" :key="deg" :transform="`rotate(${deg} 1168 946)`">
                <path d="M1168 905L1203 925Q1198 935 1184 937L1168 928Q1174 915 1168 905Z" :fill="petalFill[i]" stroke="#fff" stroke-width=".8" />
              </g>
              <polygon points="1168,925 1187,936 1187,957 1168,968 1149,957 1149,936" fill="#fff" />
              <polygon points="1168,928 1184,938 1168,947 1152,938" fill="#d1ecfb" />
              <polygon points="1152,938 1168,947 1168,965 1152,956" fill="#a9dcf8" />
              <polygon points="1184,938 1168,947 1168,965 1184,956" fill="#7fcbf2" />
            </svg>
            <div class="mark-text">
              <div class="mark-big">3D世界网</div>
              <div class="mark-small">WWW.3DSJW.COM</div>
            </div>
          </div>

          <div class="grip"><span class="grip-dots" /></div>

          <div class="root"><span class="tree-ico root-ico" v-html="icons.rootDoc" />45. catics第1届3D大赛第2题.par</div>

          <div class="tree">
            <div v-for="(r, i) in tree" :key="i" class="row" :class="`depth-${r.depth}`">
              <template v-if="r.depth < 3">
                <span class="slot-exp"><i v-if="r.exp" class="exp" :class="r.exp" /></span>
                <span v-if="r.orange" class="orange">
                  <span class="down-arrows">
                    <i /><i />
                  </span>同步建模
                  <span class="left-arrow" />
                </span>
                <template v-else>
                  <span class="slot-chk">
                    <i v-if="r.check !== undefined && !r.hideCheck" class="chk">
                      <svg v-if="r.check" width="15" height="15" viewBox="0 0 15 15"><path d="M2 7l4 4 7-8" fill="none" stroke="#1f3b66" stroke-width="2.6" /></svg>
                    </i>
                  </span>
                  <span class="node" :class="{ dim: r.dim, bold: r.bold, latin: r.latin, lg: r.lg }">
                    <span class="tree-ico" v-html="icons[r.icon]" />{{ r.text }}
                  </span>
                </template>
              </template>
              <span v-else class="node bold">
                <span class="tree-ico" v-html="icons[r.icon]" />{{ r.text }}
              </span>
            </div>
          </div>
        </div>
      </main>
    </div>
  </div>
</template>

<style>
html, body { margin: 0; background: #fff; }
</style>

<style scoped>
.page {
  width: 1415px;
  height: 1000px;
  overflow: hidden;
  display: flex;
  flex-direction: column;
  font-family: "Open Sans", "Noto Sans CJK SC", sans-serif;
  background: #fff;
}
.mono { font-family: "Liberation Mono", monospace; font-size: 15px; }

.header {
  height: 76px;
  flex: none;
  display: flex;
  border-bottom: 2px solid #d8d8d8;
  box-sizing: border-box;
}
.logo-col { width: 112px; flex: none; padding: 5px 0 0 6px; box-sizing: border-box; }
.logo {
  width: 57px;
  height: 57px;
  box-sizing: border-box;
  border: 1.5px solid #4f6f92;
  border-radius: 6px;
}
.header-main { flex: 1; min-width: 0; }
.title-row { height: 42px; display: flex; }
.quick { width: 593px; flex: none; height: 40px; display: flex; align-items: center; }
.q-btn { width: 20px; flex: none; display: flex; justify-content: center; }
.q-sep { width: 1px; flex: none; height: 38px; background: #e2e2e2; }
.q-caret {
  width: 0;
  height: 0;
  flex: none;
  border-left: 4px solid transparent;
  border-right: 4px solid transparent;
  border-top: 4px solid #444;
}
.q-caret.pale { border-top-color: #b8b8b8; }
.q-more { margin-top: -6px; }
.title {
  padding-top: 7px;
  font-size: 18px;
  color: #555;
  white-space: nowrap;
}
.tabs {
  height: 32px;
  display: flex;
  align-items: stretch;
  white-space: nowrap;
  font-size: 17.8px;
  color: #777;
}
.tab { padding: 0 22px; line-height: 33px; height: 32px; }
.tab.extra { padding-right: 23px; }
.tab.tight { padding-right: 19px; }
.tab:last-child { padding-left: 17px; }
.tab:last-child .mono { font-size: 14.4px; }
.tab.active {
  padding: 0 20px;
  margin: -1px 2px 0 3px;
  height: 33px;
  box-sizing: border-box;
  background: #fff;
  border: 1px solid #d4d4d4;
  border-bottom: 0;
  color: #4a6f96;
  position: relative;
  z-index: 1;
}

.ribbon {
  height: 140px;
  flex: none;
  box-sizing: border-box;
  border-bottom: 2px solid #d8d8d8;
  display: flex;
  padding-top: 9px;
  color: #888;
}
.group { height: 120px; box-sizing: border-box; border-right: 2px solid #e4e4e4; flex: none; }
.g-select { width: 119px; padding-left: 6px; }
.g-dim { width: 412px; }
.g-note { width: 122px; }
.g-attr { width: 120px; }
.g-view { width: 245px; }
.g-pdf { width: 186px; }
.group-body { height: 97px; display: flex; }
.group-label { text-align: center; font-size: 19px; line-height: 24px; color: #8a8a8a; white-space: nowrap; }
.g-dim .group-label, .g-attr .group-label { padding-left: 3px; }
.g-pdf .group-label { padding-left: 2px; }
.narrow { font-family: "Liberation Sans", sans-serif; font-size: 17.5px; }

.cell { display: flex; align-items: center; justify-content: center; width: 35px; height: 35px; }
.big { display: flex; flex-direction: column; align-items: center; flex: none; }
.big-icon { height: 48px; display: flex; align-items: flex-end; }
.big-text { margin-top: 19px; font-size: 17.5px; line-height: 16px; text-align: center; color: #8a8a8a; }
.big-text .mono { line-height: 10px; }
.w62 .big-text { margin-top: 20px; line-height: 14px; }

.select-btn {
  width: 65px;
  height: 105px;
  margin: -3px 0 0 6px;
  background: #b9cfea;
  display: flex;
  flex-direction: column;
  align-items: center;
  padding-top: 6px;
  box-sizing: border-box;
}
.select-text { margin-top: 17px; color: #777; }
.select-caret {
  margin-top: 9px;
  border-left: 5px solid transparent;
  border-right: 5px solid transparent;
  border-top: 5px solid #777;
}
.select-side { margin-top: -4px; }

.smart { width: 71px; margin-left: 15px; }
.dim-grid {
  display: grid;
  grid-template-columns: 52px 35px 35px;
  grid-auto-rows: 35px;
  margin: -4px 0 0 4px;
  height: 105px;
}
.cell.wide { width: 35px; }
.cell.split { width: 52px; justify-content: flex-start; padding-left: 4px; box-sizing: border-box; }
.cell.split .q-caret { margin-left: 8px; }
.cell.on { background: #b9cfea; }
.inner-sep { width: 2px; height: 120px; background: #e4e4e4; margin-left: 2px; }
.text-col { width: 44px; margin: -4px 0 0 0; display: flex; flex-direction: column; align-items: center; }
.radio-col { margin-top: -4px; margin-left: 1px; }
.radio {
  display: flex;
  align-items: center;
  height: 35px;
  font-size: 17px;
  color: #8a8a8a;
  white-space: nowrap;
}
.radio i {
  width: 19px;
  height: 19px;
  box-sizing: border-box;
  border: 1px solid #aaa;
  border-radius: 50%;
  margin-right: 10px;
  background: #fff;
  display: flex;
  align-items: center;
  justify-content: center;
}
.radio.sel i::after {
  content: "";
  width: 9px;
  height: 9px;
  border-radius: 50%;
  background: #8a8a8a;
}

.note-grid {
  display: grid;
  grid-template-columns: repeat(3, 35px);
  grid-auto-rows: 35px;
  margin: -4px 0 0 10px;
}
.attr-body { flex-direction: column; padding-left: 14px; margin-top: -3px; height: 100px; }
.attr-row {
  display: flex;
  align-items: center;
  height: 26px;
  font-size: 17.5px;
  color: #8a8a8a;
  gap: 1px;
  white-space: nowrap;
}
.g-view .group-body { padding-left: 14px; }
.w90 { width: 90px; }
.w35 { width: 35px; }
.w62 { width: 62px; }
.gap19 { margin-left: 19px; }
.gap30 { margin-left: 30px; }
.gap9 { margin-left: 9px; }
.g-pdf .group-body { padding-left: 15px; }
.big.w35 .big-text, .big.w90 .big-text { white-space: nowrap; }

.work { flex: 1; min-height: 0; display: flex; }
.strip {
  width: 44px;
  flex: none;
  background: #f1f1f1;
  display: flex;
  flex-direction: column;
  padding-top: 6px;
  box-sizing: border-box;
}
.strip-item {
  display: flex;
  justify-content: center;
  padding: 6px 4px 6px 0;
  border-left: 2px solid #dcdcdc;
  box-sizing: border-box;
}
.s1 { margin-bottom: 11px; }
.s2 { margin-bottom: 15px; }
.s3 { margin-bottom: 13px; }
.s5 { margin-bottom: 13px; }
.replay {
  display: flex;
  flex-direction: column;
  align-items: center;
  border-left: 2px solid #3a6aa0;
  box-sizing: border-box;
  padding: 5px 4px 1px 0;
  margin-bottom: 14px;
}
.replay-text {
  writing-mode: vertical-rl;
  font-size: 18px;
  color: #7d90ab;
  margin-top: 4px;
  line-height: 20px;
  font-family: "Noto Sans CJK SC", sans-serif;
}

.doc { flex: 1; min-width: 0; display: flex; flex-direction: column; }
.doc-tabs {
  height: 39px;
  flex: none;
  padding: 2px 0 0 2px;
  box-sizing: border-box;
  border-bottom: 1px solid #2b5797;
}
.doc-tab {
  width: 330px;
  height: 36px;
  background: #2b5797;
  color: #fff;
  display: flex;
  align-items: center;
  box-sizing: border-box;
  padding-left: 21px;
  font-size: 18.3px;
  white-space: nowrap;
}
.doc-name { margin-left: 4px; width: 265px; overflow: hidden; }
.doc-close { font-size: 19px; font-weight: 700; font-family: "DejaVu Sans", sans-serif; }

.canvas { flex: 1; min-height: 0; background: #fcfdfd; position: relative; padding-top: 60px; box-sizing: border-box; }
.model { position: absolute; left: 0; top: 0; }
.edge { stroke: #3f444a; stroke-width: 1; }
.mark-logo { position: absolute; left: 1087px; top: 649px; display: flex; }
.mark-text { margin-left: 8px; color: #fff; font-family: "Noto Sans CJK SC", sans-serif; }
.mark-big { font-size: 40px; font-weight: 700; line-height: 44px; margin-top: 8px; white-space: nowrap; }
.mark-small { font-size: 10px; letter-spacing: 5.4px; white-space: nowrap; line-height: 12px; margin-top: 6px; font-family: "Liberation Sans", sans-serif; }

.grip {
  width: 375px;
  height: 13px;
  box-sizing: border-box;
  border: 2px solid #8d8d8d;
  border-radius: 2px;
  background: linear-gradient(#f5f5f5, #c9c9c9);
  display: flex;
  align-items: center;
  justify-content: center;
}
.grip-dots { width: 40px; border-top: 2px dotted #5a6b85; }

.root {
  width: 297px;
  height: 22px;
  margin: 6px 0 0 8px;
  box-sizing: border-box;
  border: 1px solid #b5c0c8;
  background: linear-gradient(#fafbfc, #e2e7ec);
  display: flex;
  align-items: center;
  font-size: 17.8px;
  line-height: 20px;
  color: #222;
  white-space: nowrap;
}
.tree { margin-top: -1px; }
.tree-ico { display: flex; width: 29px; flex: none; align-items: center; }
.root-ico { margin-left: 3px; width: 26px; }

.row { height: 24px; display: flex; align-items: center; }
.depth-1 { padding-left: 23px; }
.depth-2 { padding-left: 58px; }
.depth-3 { padding-left: 136px; }
.slot-exp { width: 24px; flex: none; display: flex; }
.slot-chk { width: 27px; flex: none; display: flex; }
.exp {
  width: 12px;
  height: 12px;
  box-sizing: border-box;
  border: 1px solid #7c7c7c;
  background: linear-gradient(#fff, #cfcfcf);
  position: relative;
  margin-left: 1px;
}
.exp::before {
  content: "";
  position: absolute;
  left: 2px;
  right: 2px;
  top: 4px;
  height: 1px;
  background: #222;
}
.exp.plus::after {
  content: "";
  position: absolute;
  top: 2px;
  bottom: 2px;
  left: 4px;
  width: 1px;
  background: #222;
}
.chk {
  width: 19px;
  height: 19px;
  box-sizing: border-box;
  border: 2px solid #5b6c86;
  border-radius: 2px;
  background: #fafbfc;
  display: flex;
}
.node {
  height: 22px;
  box-sizing: border-box;
  border: 1px solid #b5c0c8;
  background: linear-gradient(#fafbfc, #e0e5ea);
  display: inline-flex;
  align-items: center;
  padding-right: 8px;
  font-size: 19px;
  color: #222;
  white-space: nowrap;
}
.node.latin { font-size: 17.2px; }
.node.lg { font-size: 20px; }
.node.dim { color: #9aa0a6; }
.node.bold { font-weight: 700; color: #111; }
.orange {
  width: 275px;
  height: 22px;
  box-sizing: border-box;
  background: linear-gradient(#f5b53a, #fcd76f 45%, #f2a722);
  display: flex;
  align-items: center;
  font-size: 19px;
  font-weight: 700;
  color: #111;
  white-space: nowrap;
  position: relative;
}
.down-arrows { display: flex; width: 31px; justify-content: center; gap: 2px; padding-left: 6px; box-sizing: border-box; }
.down-arrows i {
  width: 6px;
  height: 15px;
  background: linear-gradient(#fff, #fff) center top / 2px 9px no-repeat, linear-gradient(to bottom right, transparent 50%, #fff 50%) left 9px / 3px 6px no-repeat, linear-gradient(to bottom left, transparent 50%, #fff 50%) right 9px / 3px 6px no-repeat;
}
.left-arrow {
  position: absolute;
  right: 16px;
  top: 3px;
  border-top: 8px solid transparent;
  border-bottom: 8px solid transparent;
  border-right: 24px solid #fff;
}
</style>
